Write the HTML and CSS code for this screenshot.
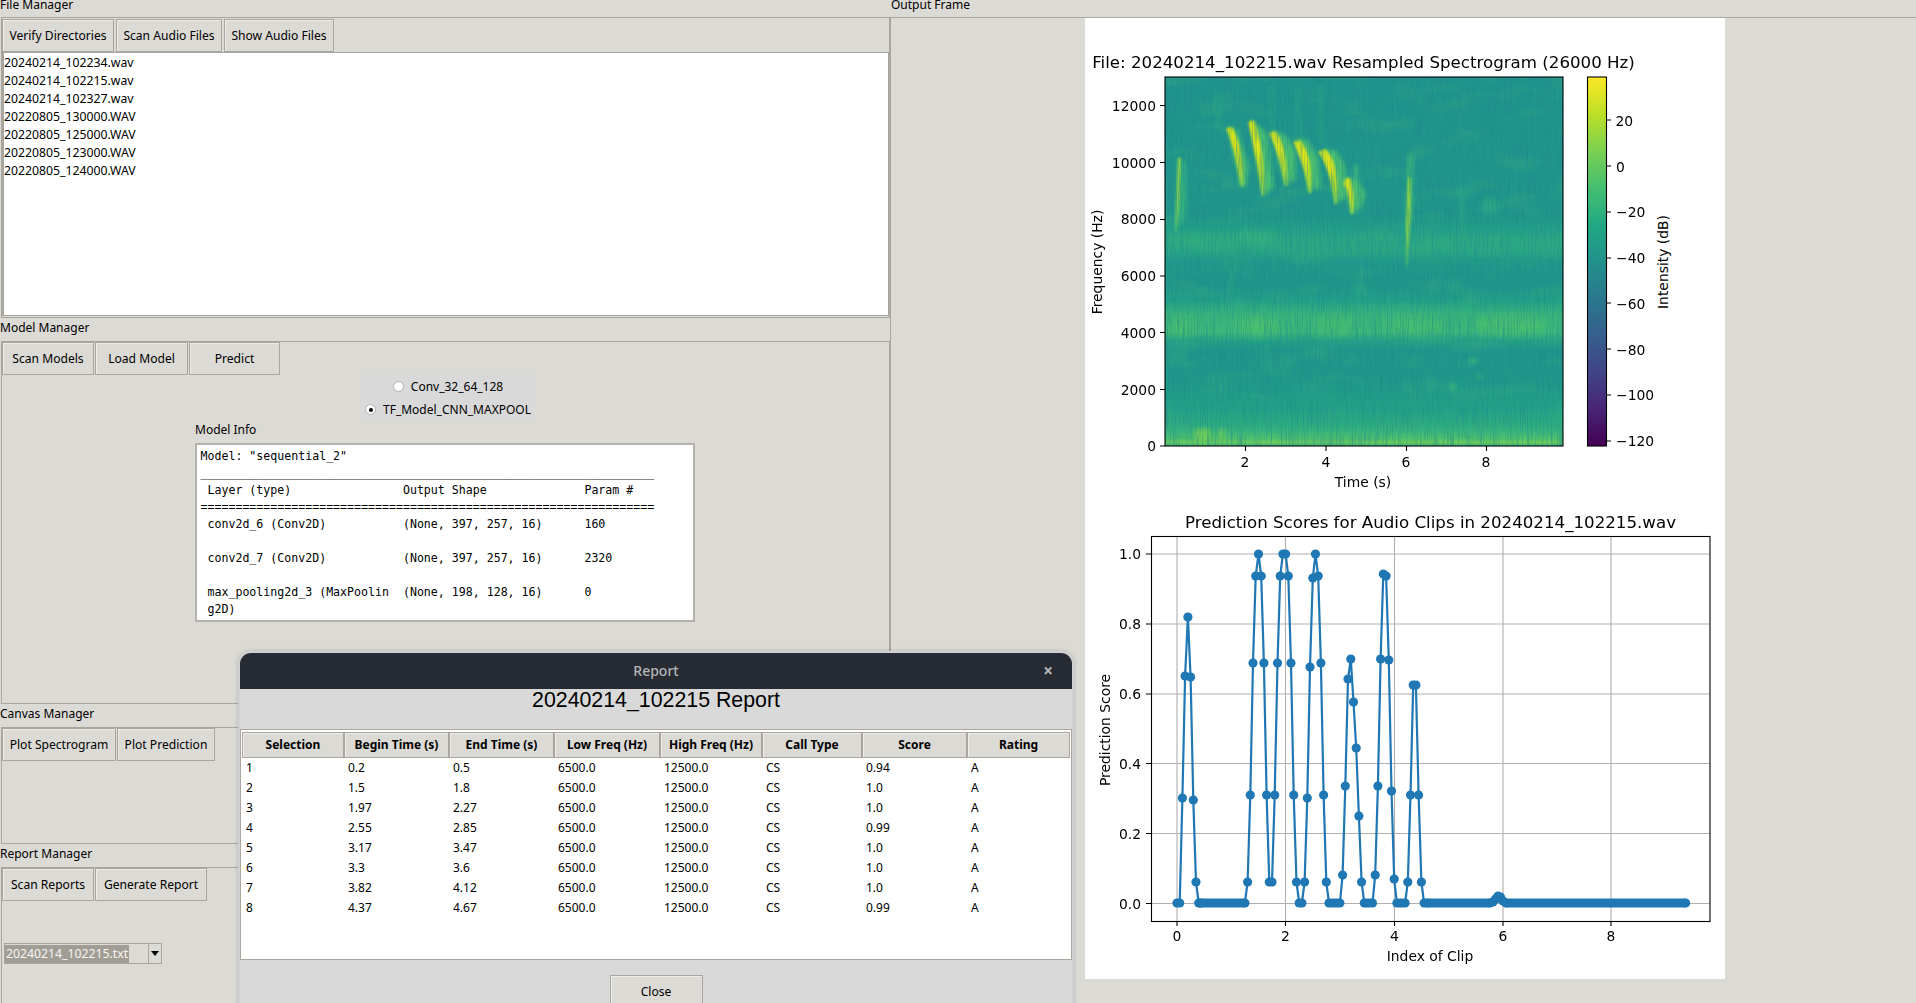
FILE: index.html
```html
<!DOCTYPE html>
<html lang="en">
<head>
<meta charset="utf-8">
<title>Audio Classifier</title>
<link rel="stylesheet" href="styles.css">
</head>
<body>
<div class="app">
  <div class="left-pane">
    <section class="group">
      <div class="legend legend-first">File Manager</div>
      <div class="frame frame-file">
        <div class="toolbar toolbar-file">
          <button class="btn w-verify">Verify Directories</button>
          <button class="btn w-scan-audio">Scan Audio Files</button>
          <button class="btn w-show-audio">Show Audio Files</button>
        </div>
        <ul class="listbox">
          <li>20240214_102234.wav</li>
          <li>20240214_102215.wav</li>
          <li>20240214_102327.wav</li>
          <li>20220805_130000.WAV</li>
          <li>20220805_125000.WAV</li>
          <li>20220805_123000.WAV</li>
          <li>20220805_124000.WAV</li>
        </ul>
      </div>
    </section>

    <section class="group">
      <div class="legend">Model Manager</div>
      <div class="frame frame-model">
        <div class="toolbar">
          <button class="btn w-scan-models">Scan Models</button>
          <button class="btn w-load">Load Model</button>
          <button class="btn w-predict">Predict</button>
        </div>
        <div class="radio-group">
          <label class="radio-row"><span class="radio"></span>Conv_32_64_128</label>
          <label class="radio-row"><span class="radio radio-on"></span>TF_Model_CNN_MAXPOOL</label>
        </div>
        <div class="model-info">
          <div class="model-info-label">Model Info</div>
<pre class="summary">Model: "sequential_2"
_________________________________________________________________
 Layer (type)                Output Shape              Param #
=================================================================
 conv2d_6 (Conv2D)           (None, 397, 257, 16)      160

 conv2d_7 (Conv2D)           (None, 397, 257, 16)      2320

 max_pooling2d_3 (MaxPoolin  (None, 198, 128, 16)      0
 g2D)</pre>
        </div>
      </div>
    </section>

    <section class="group">
      <div class="legend">Canvas Manager</div>
      <div class="frame frame-canvas">
        <div class="toolbar">
          <button class="btn w-plot-spec">Plot Spectrogram</button>
          <button class="btn w-plot-pred">Plot Prediction</button>
        </div>
      </div>
    </section>

    <section class="group">
      <div class="legend">Report Manager</div>
      <div class="frame frame-report">
        <div class="toolbar">
          <button class="btn w-scan-reports">Scan Reports</button>
          <button class="btn w-generate">Generate Report</button>
        </div>
        <div class="combo">
          <span class="combo-value"><span class="combo-selected">20240214_102215.txt</span></span>
          <span class="combo-arrow"></span>
        </div>
      </div>
    </section>
  </div>

  <div class="right-pane">
    <div class="legend legend-first legend-output">Output Frame</div>
    <div class="output-frame">
      <svg class="figure" width="640" height="961" viewBox="1085 18 640 961" xmlns="http://www.w3.org/2000/svg">
        <defs>
          <linearGradient id="specBase" gradientUnits="userSpaceOnUse" x1="0" y1="77" x2="0" y2="446">
            <stop offset="0" stop-color="#1f948c"/>
            <stop offset=".374" stop-color="#20968b"/>
            <stop offset=".42" stop-color="#24a187"/>
            <stop offset=".44" stop-color="#2ba683"/>
            <stop offset=".468" stop-color="#29a684"/>
            <stop offset=".50" stop-color="#20998a"/>
            <stop offset=".564" stop-color="#1f958b"/>
            <stop offset=".604" stop-color="#229f88"/>
            <stop offset=".62" stop-color="#2aa982"/>
            <stop offset=".645" stop-color="#3ab57b"/>
            <stop offset=".69" stop-color="#3eb879"/>
            <stop offset=".715" stop-color="#25a186"/>
            <stop offset=".74" stop-color="#1f968b"/>
            <stop offset=".82" stop-color="#1f988a"/>
            <stop offset=".90" stop-color="#22a187"/>
            <stop offset=".943" stop-color="#2eac80"/>
            <stop offset=".962" stop-color="#3cb67a"/>
            <stop offset=".98" stop-color="#4fc16c"/>
            <stop offset=".99" stop-color="#6ecd5a"/>
            <stop offset="1" stop-color="#3cb67a"/>
          </linearGradient>
          <linearGradient id="viridis" x1="0" y1="1" x2="0" y2="0">
            <stop offset="0" stop-color="#440154"/>
            <stop offset=".1" stop-color="#482475"/>
            <stop offset=".2" stop-color="#414487"/>
            <stop offset=".3" stop-color="#355f8d"/>
            <stop offset=".4" stop-color="#2a788e"/>
            <stop offset=".5" stop-color="#21918c"/>
            <stop offset=".6" stop-color="#22a884"/>
            <stop offset=".7" stop-color="#44bf70"/>
            <stop offset=".8" stop-color="#7ad151"/>
            <stop offset=".9" stop-color="#bddf26"/>
            <stop offset="1" stop-color="#fde725"/>
          </linearGradient>
          <linearGradient id="chirpCore" x1="0" y1="0" x2="0" y2="1">
            <stop offset="0" stop-color="#c8e020"/>
            <stop offset=".3" stop-color="#e2e418"/>
            <stop offset=".7" stop-color="#b5de2b"/>
            <stop offset="1" stop-color="#7ad151"/>
          </linearGradient>
          <linearGradient id="chirpGreen" x1="0" y1="0" x2="0" y2="1">
            <stop offset="0" stop-color="#8bd646"/>
            <stop offset=".5" stop-color="#a0da39"/>
            <stop offset="1" stop-color="#44bf70"/>
          </linearGradient>
          <filter id="streakDark" x="0" y="0" width="100%" height="100%" color-interpolation-filters="sRGB">
            <feTurbulence type="fractalNoise" baseFrequency="0.8 0.035" numOctaves="2" seed="4"/>
            <feColorMatrix type="matrix" values="0 0 0 0 .12  0 0 0 0 .53  0 0 0 0 .55  1.4 0 0 0 -.62"/>
          </filter>
          <filter id="mottle" x="0" y="0" width="100%" height="100%" color-interpolation-filters="sRGB">
            <feTurbulence type="fractalNoise" baseFrequency="0.02 0.06" numOctaves="3" seed="9"/>
            <feColorMatrix type="matrix" values="0 0 0 0 .22  0 0 0 0 .68  0 0 0 0 .50  1.2 0 0 0 -.6"/>
          </filter>
          <filter id="blur4" x="-50%" y="-50%" width="200%" height="200%"><feGaussianBlur stdDeviation="4"/></filter>
          <filter id="blur2" x="-50%" y="-50%" width="200%" height="200%"><feGaussianBlur stdDeviation="2"/></filter>
          <filter id="blur1" x="-50%" y="-50%" width="200%" height="200%"><feGaussianBlur stdDeviation=".8"/></filter>
          <clipPath id="specClip"><rect x="1165" y="77" width="398" height="369"/></clipPath>
          <marker id="dot" markerUnits="userSpaceOnUse" markerWidth="11" markerHeight="11" refX="5.5" refY="5.500">
            <circle cx="5.5" cy="5.5" r="4.6" fill="#1f77b4"/>
          </marker>
        </defs>

        <rect class="fig-bg" x="1085" y="18" width="640" height="961"/>

        <g clip-path="url(#specClip)">
          <rect x="1165" y="77" width="398" height="369" fill="url(#specBase)"/>
          <g filter="url(#blur4)">
            <rect x="1165" y="234" width="105" height="12" fill="#2eac80"/>
            <rect x="1240" y="232" width="34" height="8" fill="#35b37d"/>
            <rect x="1270" y="243" width="293" height="9" fill="#2aa883"/>
            <ellipse cx="1182" cy="326" rx="14" ry="9" fill="#49c06e"/>
            <ellipse cx="1258" cy="326" rx="22" ry="9" fill="#49c06e"/>
            <ellipse cx="1335" cy="325" rx="20" ry="8" fill="#46be70"/>
            <ellipse cx="1415" cy="325" rx="28" ry="8" fill="#46be70"/>
            <ellipse cx="1510" cy="325" rx="35" ry="9" fill="#4ac06d"/>
            <ellipse cx="1455" cy="287" rx="8" ry="5" fill="#2aa883"/>
            <ellipse cx="1360" cy="290" rx="7" ry="6" fill="#2aa883"/>
          </g>
          <rect x="1165" y="77" width="398" height="369" filter="url(#mottle)"/>
          <g filter="url(#blur2)">
            <ellipse cx="1203" cy="436" rx="9" ry="8" fill="#6acb5c"/>
            <ellipse cx="1222" cy="436" rx="2.5" ry="8" fill="#74cf55"/>
            <ellipse cx="1473" cy="361" rx="5" ry="2.5" fill="#3bb67b"/>
            <ellipse cx="1480" cy="377" rx="3" ry="2" fill="#35b37d"/>
            <ellipse cx="1453" cy="386" rx="3" ry="4" fill="#3bb67b"/>
            <path d="M1232 268 L1229 298" stroke="#30ae80" stroke-width="2" fill="none"/>
            <path d="M1218 92 V128 M1272 85 V125 M1298 90 V135 M1321 85 V145" stroke="#26a386" stroke-width="6" fill="none" opacity=".6"/>
            <path d="M1462 185 V235" stroke="#29a684" stroke-width="4" fill="none"/>
            <ellipse cx="1490" cy="205" rx="8" ry="8" fill="#29a684"/>
            <path d="M1177 158 L1186 162 L1187 215 L1175 230 Z" fill="#32ae7f"/>
            <path d="M1228 128 L1238 130 L1249 168 L1246 188 L1241 186 L1232 150 Z" fill="#48be71"/>
            <path d="M1250 120 L1262 128 L1267 135 L1274 188 L1265 195 L1258 160 Z" fill="#48be71"/>
            <path d="M1271 130 L1285 135 L1295 150 L1296 180 L1286 185 L1278 155 Z" fill="#48be71"/>
            <path d="M1295 138 L1308 140 L1319 160 L1320 186 L1311 192 L1305 165 Z" fill="#48be71"/>
            <path d="M1320 150 L1335 150 L1345 165 L1346 198 L1337 203 L1330 170 Z" fill="#48be71"/>
            <path d="M1345 178 L1358 180 L1366 195 L1360 208 L1352 214 L1348 195 Z" fill="#48be71"/>
            <path d="M1354 165 L1359 165 L1358 182 L1353 182 Z" fill="#3bb67b"/>
            <path d="M1407 175 L1414 178 L1412 215 L1406 240 Z" fill="#3bb67b"/>
            <path d="M1408 152 L1414 155 L1412 178 L1407 178 Z" fill="#3bb67b"/>
          </g>
          <g fill="url(#chirpCore)" filter="url(#blur1)">
            <path d="M1226 128 Q1235 148 1240.500 186 L1243.500 186 Q1243 145 1232 127Z"/>
            <path d="M1248 122 Q1256 155 1261.500 196 L1264.500 196 Q1265 150 1254 120Z"/>
            <path d="M1269 133 Q1280 155 1284.500 186 L1287.500 186 Q1288 150 1276 131Z"/>
            <path d="M1293 142 Q1303 160 1308.500 193 L1311.500 193 Q1313 155 1300 140Z"/>
            <path d="M1318 152 Q1329 165 1334.500 204 L1337.500 204 Q1339 160 1325 149Z"/>
            <path d="M1343 185 L1346 178 L1350 178 Q1354 190 1354 214 L1350.500 214 Q1349 195 1345 185Z"/>
          </g>
          <g fill="url(#chirpGreen)" filter="url(#blur1)">
            <path d="M1175 232 Q1177 195 1178 158 L1181 158 Q1180 195 1177 232Z"/>
            <path d="M1406 268 Q1406 215 1408 177 L1411 177 Q1411 220 1407 268Z"/>
          </g>
          <rect x="1165" y="77" width="398" height="369" filter="url(#streakDark)"/>
        </g>
        <rect class="spine" x="1165" y="77" width="398" height="369"/>

        <path class="tick" d="M1245.500 446v5M1326 446v5M1406.500 446v5M1486.500 446v5M1160 105.500h5M1160 162.500h5M1160 219.500h5M1160 276h5M1160 332.500h5M1160 389.500h5M1160 446h5"/>
        <g class="t" text-anchor="end">
          <text x="1156" y="110.500">12000</text>
          <text x="1156" y="167.500">10000</text>
          <text x="1156" y="224">8000</text>
          <text x="1156" y="281">6000</text>
          <text x="1156" y="337.500">4000</text>
          <text x="1156" y="394.500">2000</text>
          <text x="1156" y="451">0</text>
        </g>
        <g class="t" text-anchor="middle">
          <text x="1245" y="467">2</text>
          <text x="1326" y="467">4</text>
          <text x="1406" y="467">6</text>
          <text x="1486" y="467">8</text>
          <text x="1363" y="487">Time (s)</text>
          <text transform="translate(1102 262) rotate(-90)">Frequency (Hz)</text>
          <text transform="translate(1668 262) rotate(-90)">Intensity (dB)</text>
        </g>
        <text class="title" x="1363.500" y="68" text-anchor="middle">File: 20240214_102215.wav Resampled Spectrogram (26000 Hz)</text>

        <rect x="1587.500" y="77" width="19" height="369" fill="url(#viridis)"/>
        <rect class="spine" x="1587.500" y="77" width="19" height="369"/>
        <path class="tick" d="M1606 120h5M1606 166h5M1606 212h5M1606 258h5M1606 303h5M1606 349h5M1606 395h5M1606 441h5"/>
        <g class="t">
          <text x="1615.500" y="125.500">20</text>
          <text x="1616" y="171.500">0</text>
          <text x="1616" y="217">−20</text>
          <text x="1616" y="263">−40</text>
          <text x="1616" y="308.500">−60</text>
          <text x="1616" y="354.500">−80</text>
          <text x="1616" y="400">−100</text>
          <text x="1616" y="446">−120</text>
        </g>

        <text class="title" x="1430.500" y="527.500" text-anchor="middle">Prediction Scores for Audio Clips in 20240214_102215.wav</text>
        <path class="grid" d="M1177 536.500V921M1285.500 536.500V921M1394.500 536.500V921M1503 536.500V921M1611 536.500V921M1151 554H1710M1151 624H1710M1151 694H1710M1151 763.500H1710M1151 833.500H1710M1151 903.500H1710"/>
        <polyline class="pred-line" marker-start="url(#dot)" marker-mid="url(#dot)" marker-end="url(#dot)" points="1177,903 1179.700,903 1182.400,798 1185.100,676 1187.900,617 1190.600,677 1193.300,800 1196,882 1198.700,903 1201.400,903 1244.900,903 1247.600,882 1250.300,795 1253,663 1255.700,576 1258.500,554 1261.200,576 1263.900,663 1266.600,795 1269.300,882 1272,882 1274.700,795 1277.500,663 1280.200,576 1282.900,554 1285.600,554 1288.300,576 1291,663 1293.700,795 1296.500,882 1299.200,903 1301.900,903 1304.600,882 1307.300,798 1310,667 1312.800,578 1315.500,554 1318.200,576 1320.900,663 1323.600,795 1326.300,882 1329,903 1331.800,903 1334.500,903 1337.200,903 1339.900,903 1342.600,875 1345.300,786 1348,679 1350.800,659 1353.500,702 1356.200,748 1358.900,816 1361.600,882 1364.300,903 1367,903 1369.800,903 1372.500,903 1375.200,875 1377.900,786 1380.600,659 1383.300,574 1386.100,576 1388.800,660 1391.500,791 1394.200,879 1396.900,903 1399.600,903 1402.300,903 1405.100,903 1407.800,882 1410.500,795 1413.200,685 1415.900,685 1418.600,795 1421.400,882 1424.100,903 1426.800,903 1490,903 1493,902 1495.500,899 1498,896 1500.500,897 1503,901 1506,903 1685.600,903"/>
        <path class="pred-run" d="M1198.700 903H1244.900M1426.800 903H1490M1506 903H1685.600"/>
        <rect class="spine" x="1151.500" y="536.500" width="558.500" height="385"/>
        <path class="tick" d="M1177 921v5M1285.500 921v5M1394.500 921v5M1503 921v5M1611 921v5M1146 554h5M1146 624h5M1146 694h5M1146 763.500h5M1146 833.500h5M1146 903.500h5"/>
        <g class="t" text-anchor="end">
          <text x="1141" y="559">1.0</text>
          <text x="1141" y="629">0.8</text>
          <text x="1141" y="699">0.6</text>
          <text x="1141" y="769">0.4</text>
          <text x="1141" y="838.500">0.2</text>
          <text x="1141" y="908.500">0.0</text>
        </g>
        <g class="t" text-anchor="middle">
          <text x="1177" y="941">0</text>
          <text x="1285.500" y="941">2</text>
          <text x="1394.500" y="941">4</text>
          <text x="1503" y="941">6</text>
          <text x="1611" y="941">8</text>
          <text x="1430" y="961">Index of Clip</text>
          <text transform="translate(1110 730) rotate(-90)">Prediction Score</text>
        </g>
      </svg>
    </div>
  </div>

  <div class="dialog">
    <div class="titlebar">
      <span class="titlebar-text">Report</span>
      <span class="titlebar-close">×</span>
    </div>
    <div class="dialog-body">
      <h1 class="report-title">20240214_102215 Report</h1>
      <div class="table-frame">
        <table class="report-table">
          <colgroup>
            <col class="c1"><col class="c2"><col class="c3"><col class="c4"><col class="c5"><col class="c6"><col class="c7"><col class="c8">
          </colgroup>
          <thead>
            <tr><th>Selection</th><th>Begin Time (s)</th><th>End Time (s)</th><th>Low Freq (Hz)</th><th>High Freq (Hz)</th><th>Call Type</th><th>Score</th><th>Rating</th></tr>
          </thead>
          <tbody>
            <tr><td>1</td><td>0.2</td><td>0.5</td><td>6500.0</td><td>12500.0</td><td>CS</td><td>0.94</td><td>A</td></tr>
            <tr><td>2</td><td>1.5</td><td>1.8</td><td>6500.0</td><td>12500.0</td><td>CS</td><td>1.0</td><td>A</td></tr>
            <tr><td>3</td><td>1.97</td><td>2.27</td><td>6500.0</td><td>12500.0</td><td>CS</td><td>1.0</td><td>A</td></tr>
            <tr><td>4</td><td>2.55</td><td>2.85</td><td>6500.0</td><td>12500.0</td><td>CS</td><td>0.99</td><td>A</td></tr>
            <tr><td>5</td><td>3.17</td><td>3.47</td><td>6500.0</td><td>12500.0</td><td>CS</td><td>1.0</td><td>A</td></tr>
            <tr><td>6</td><td>3.3</td><td>3.6</td><td>6500.0</td><td>12500.0</td><td>CS</td><td>1.0</td><td>A</td></tr>
            <tr><td>7</td><td>3.82</td><td>4.12</td><td>6500.0</td><td>12500.0</td><td>CS</td><td>1.0</td><td>A</td></tr>
            <tr><td>8</td><td>4.37</td><td>4.67</td><td>6500.0</td><td>12500.0</td><td>CS</td><td>0.99</td><td>A</td></tr>
          </tbody>
        </table>
      </div>
      <div class="dialog-actions"><button class="btn w-close">Close</button></div>
    </div>
  </div>
</div>
</body>
</html>
```
FILE: styles.css
```css
* { box-sizing: border-box; }
html, body { margin: 0; height: 100%; overflow: hidden; }
body { font-family: "Noto Sans", sans-serif; font-size: 12px; color: #000; background: #dcdad5; }

.app { position: relative; display: flex; width: 1916px; height: 1003px; overflow: hidden; background: #dcdad5; }
.left-pane { width: 890px; flex: none; }
.right-pane { flex: 1; min-width: 0; }

.legend { height: 23px; line-height: 20px; white-space: nowrap; }
.legend-first { height: 17px; line-height: 10px; }
.legend-output { padding-left: 1px; }

.frame { margin-left: 1px; border: 1px solid #a9a69f; }
.frame-file { height: 301px; }
.frame-model { height: 363px; }
.frame-canvas { height: 117px; }
.frame-report { height: 140px; border-bottom: 0; }

.toolbar { display: flex; gap: 1px; height: 33px; }
.toolbar-file { gap: 2px; margin: 1px 0 0 0; }

.btn {
  display: block; height: 33px; padding: 0; margin: 0;
  font: 12.1px "Noto Sans", sans-serif; color: #000; background: #dcdad5;
  border: 1px solid #a9a69f; box-shadow: inset 1px 1px 0 #eeece8;
}
.w-verify { width: 112px; }
.w-scan-audio { width: 106px; }
.w-show-audio { width: 110px; }
.w-scan-models { width: 92px; }
.w-load { width: 93px; }
.w-predict { width: 91px; }
.w-plot-spec { width: 114px; }
.w-plot-pred { width: 98px; }
.w-scan-reports { width: 92px; }
.w-generate { width: 112px; }
.w-close { width: 93px; flex: none; }

.listbox {
  list-style: none; margin: 0; padding: 1px 0 0 0; height: 264px; font-size: 12.25px;
  background: #fff; border: 1px solid #a9a69f; border-left-width: 2px;
}
.listbox li { height: 18px; line-height: 18px; }

.radio-group { margin-left: 358px; width: 174px; height: 45px; background: #d9d9d9; display: flex; flex-direction: column; }
.radio-row { height: 23px; flex: none; display: flex; align-items: center; justify-content: center; gap: 7px; padding-left: 2px; }
.radio { width: 11px; height: 11px; border-radius: 50%; background: #fff; border: 1px solid #b0aea8; position: relative; flex: none; }
.radio-on::after { content: ""; position: absolute; left: 2.5px; top: 2.5px; width: 4px; height: 4px; border-radius: 50%; background: #000; }

.model-info { margin-left: 193px; }
.model-info-label { height: 23px; line-height: 20px; }
.summary {
  margin: 0; width: 500px; height: 179px; overflow: hidden; padding: 3px 3px 3px 3.5px;
  font: 11.6px/17px "DejaVu Sans Mono", monospace; color: #000; background: #fff;
  border: 2px solid #b4b1aa;
}

.combo { display: flex; width: 158px; height: 21px; margin: 42px 0 0 2px; border: 1px solid #a9a69f; background: #dcdad5; }
.combo-value { flex: 1; padding: 1px 0 0 0; line-height: 17px; font-size: 12.25px; }
.combo-selected { display: inline-block; background: #a19d95; color: #f6f5f2; padding: 0 1px; height: 18px; }
.combo-arrow { width: 13px; border-left: 1px solid #a9a69f; position: relative; }
.combo-arrow::after { content: ""; position: absolute; left: 2px; top: 7px; border: 4px solid transparent; border-top: 5px solid #000; border-bottom: 0; }

.output-frame { height: 986px; border-top: 1px solid #a9a69f; border-left: 1px solid #a9a69f; display: flex; padding-left: 194px; }
.figure { display: block; flex: none; }
.fig-bg { fill: #fff; }

.spine { fill: none; stroke: #000; stroke-width: 1.1; }
.tick { fill: none; stroke: #000; stroke-width: 1.1; }
.grid { fill: none; stroke: #b0b0b0; stroke-width: 1.1; }
.pred-line { fill: none; stroke: #1f77b4; stroke-width: 2.2; stroke-linejoin: round; }
.pred-run { fill: none; stroke: #1f77b4; stroke-width: 9.2; }
.t text, .t { font: 13.89px "DejaVu Sans", sans-serif; fill: #000; }
.title { font: 16.67px "DejaVu Sans", sans-serif; fill: #000; }

.dialog {
  position: absolute; left: 238px; top: 651px; width: 836px; height: 360px;
  border: 2px solid #cfd0d3; border-bottom: 0; border-radius: 13px 13px 0 0;
  background: #d9d9d9; overflow: hidden;
  box-shadow: 0 0 4px rgba(0, 0, 0, .18);
}
.titlebar { position: relative; height: 36px; background: #272b33; color: #b4b6ba; display: flex; align-items: center; justify-content: center; font-size: 14px; font-weight: 500; padding-bottom: 2px; }
.titlebar-close { position: absolute; right: 19px; top: 8px; font-size: 17px; line-height: 20px; color: #b4b6ba; font-weight: 700; }
.dialog-body { padding: 0; }
.report-title { margin: 0; height: 40px; text-align: center; font: 400 21.33px/23px "Liberation Sans", sans-serif; color: #000; }
.table-frame { height: 231px; margin: 0; padding: 2px 2px 0 1px; background: #fff; border: 1px solid #a9a69f; }
.report-table { border-collapse: separate; border-spacing: 0; table-layout: fixed; width: 828px; }
.c1 { width: 102px; } .c2 { width: 105px; } .c3 { width: 105px; } .c4 { width: 106px; }
.c5 { width: 102px; } .c6 { width: 100px; } .c7 { width: 105px; } .c8 { width: 103px; }
.report-table th {
  height: 26px; padding: 0 0 2px; font-size: 12px; font-weight: 700; text-align: center;
  background: #dcdad5; border: 1px solid #a9a69f; box-shadow: inset 1px 1px 0 #eeece8; white-space: nowrap;
}
.report-table td { height: 20px; padding: 0 0 0 4px; line-height: 20px; white-space: nowrap; }
.dialog-actions { display: flex; justify-content: center; padding-top: 15px; }
```
